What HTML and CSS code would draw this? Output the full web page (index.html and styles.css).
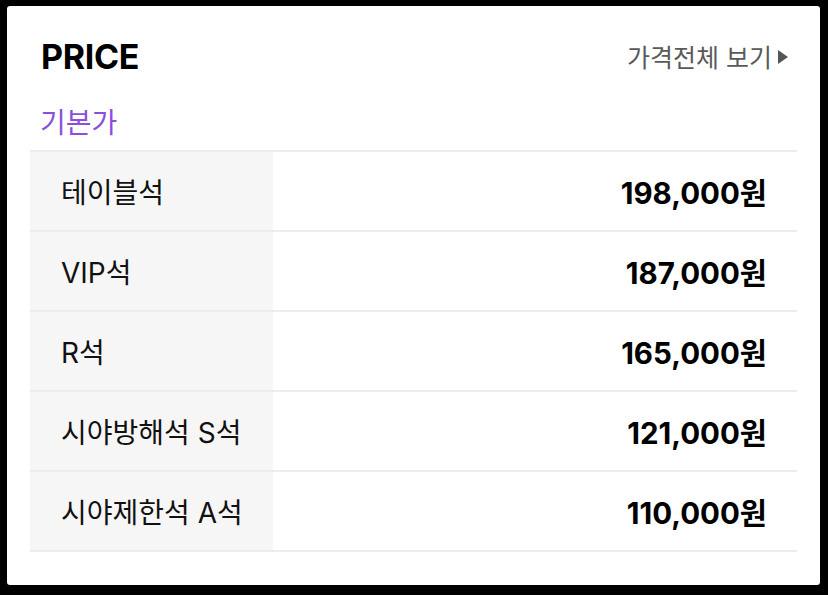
FILE: index.html
```html
<!DOCTYPE html>
<html lang="ko">
<head>
<meta charset="utf-8">
<link rel="stylesheet" href="styles.css">
</head>
<body>
<div class="card">
  <div class="head">
    <h2 class="title">PRICE</h2>
    <a class="more">가격전체 보기<span class="tri"></span></a>
  </div>
  <div class="sub">기본가</div>
  <div class="table">
    <div class="row"><div class="label">테이블석</div><div class="price">198,000원</div></div>
    <div class="row"><div class="label">VIP석</div><div class="price">187,000원</div></div>
    <div class="row"><div class="label">R석</div><div class="price">165,000원</div></div>
    <div class="row"><div class="label">시야방해석 S석</div><div class="price">121,000원</div></div>
    <div class="row"><div class="label">시야제한석 A석</div><div class="price">110,000원</div></div>
  </div>
</div>
</body>
</html>
```
FILE: styles.css
```css
* { box-sizing: border-box; }
html, body { margin: 0; }
body {
  background: #000;
  padding: 6px 8px 10px 7px;
  font-family: Inter, "Noto Sans CJK KR", sans-serif;
  color: #111;
}
.card {
  background: #fff;
  border-radius: 3px;
  height: 579px;
  padding: 30px 23px 0 23px;
}
.head {
  display: flex;
  justify-content: space-between;
  align-items: center;
  padding: 0 9px 0 11px;
  height: 40px;
}
.title {
  margin: 0;
  font-size: 34px;
  font-weight: 700;
  letter-spacing: -0.3px;
  color: #000;
}
.more {
  font-size: 25px;
  color: #5a5a5a;
  display: flex;
  align-items: center;
  gap: 6px;
}
.tri {
  width: 0; height: 0;
  border-left: 10px solid #555;
  border-top: 7px solid transparent;
  border-bottom: 7px solid transparent;
  margin-top: 1px;
}
.sub {
  color: #8a4fe0;
  font-size: 28px;
  padding: 25px 0 0 10px;
  height: 74px;
  line-height: 44px;
}
.table {
  border-bottom: 2px solid #ececec;
}
.row {
  display: flex;
  height: 80px;
  border-top: 2px solid #ececec;
}
.label {
  width: 243px;
  background: #f6f6f6;
  font-size: 28px;
  padding-left: 31px;
  display: flex;
  align-items: center;
}
.price {
  flex: 1;
  text-align: right;
  padding-right: 30px;
  font-size: 29.5px;
  font-weight: 700;
  display: flex;
  align-items: center;
  justify-content: flex-end;
  color: #000;
}
```
